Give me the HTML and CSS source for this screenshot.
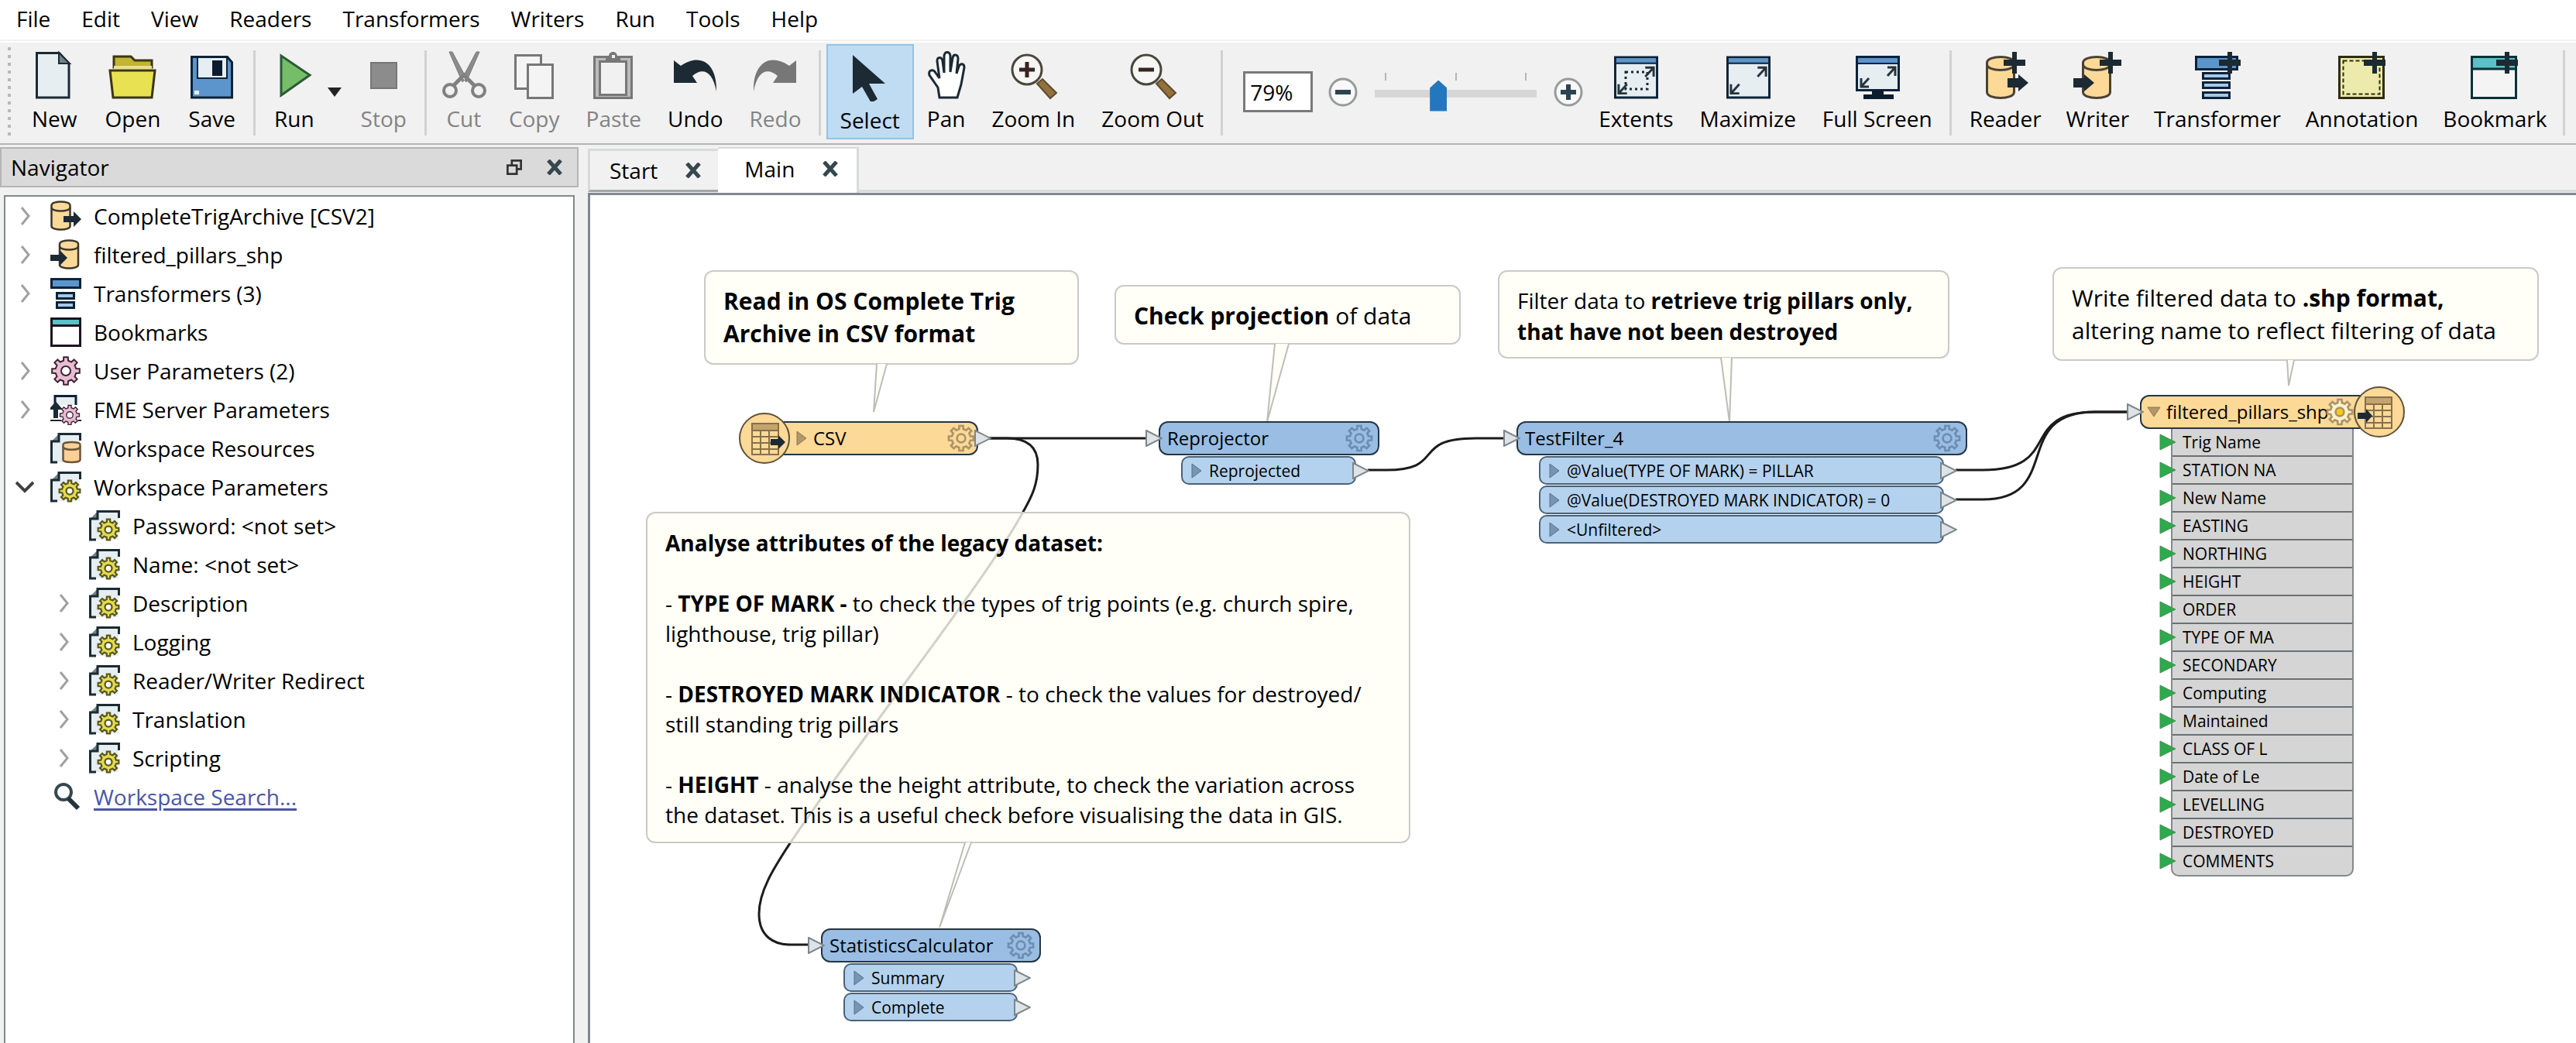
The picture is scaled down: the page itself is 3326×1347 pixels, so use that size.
FILE: index.html
```html
<!DOCTYPE html>
<html lang="en">
<head>
<meta charset="utf-8">
<title>Workbench - Main</title>
<link rel="stylesheet" href="styles.css">
</head>
<body>
<svg class="sprite" aria-hidden="true">
  <symbol id="gear" viewBox="-20 -20 40 40">
    <path d="M13.2-3 17.8-2.8 17.8 2.8 13.2 3 11.5 7.2 14.6 10.6 10.6 14.6 7.2 11.5 3 13.2 2.8 17.8-2.8 17.8-3 13.2-7.2 11.5-10.6 14.6-14.6 10.6-11.5 7.2-13.2 3-17.8 2.8-17.8-2.8-13.2-3-11.5-7.2-14.6-10.6-10.6-14.6-7.2-11.5-3-13.2-2.8-17.8 2.8-17.8 3-13.2 7.2-11.5 10.6-14.6 14.6-10.6 11.5-7.2z"/>
    <circle class="hub" r="6"/>
  </symbol>
  <symbol id="plus" viewBox="0 0 28 28"><path d="M11 0h6v10h11v8H17v10h-6V18H0v-8h11z" fill="#1b2a33"/></symbol>
  <symbol id="arrow" viewBox="0 0 28 22"><path d="M0 5h14V0l13 11-13 11v-5H0z" fill="#1b2a33"/></symbol>
  <symbol id="cylinder" viewBox="0 0 38 56">
    <path d="M1.500 9C1.500-1 36.500-1 36.500 9v38c0 10-35 10-35 0z" fill="#fdd998" stroke="#4a4233" stroke-width="3"/>
    <path d="M1.500 11c0 10 35 10 35 0" fill="none" stroke="#4a4233" stroke-width="3"/>
  </symbol>
  <symbol id="reader" viewBox="0 0 40 40">
    <path d="M1.500 6c0-6 24-6 24 0v27c0 6-24 6-24 0z" fill="#fdd998" stroke="#3d382d" stroke-width="2.500"/>
    <path d="M1.500 9c0 6 24 6 24 0" fill="none" stroke="#3d382d" stroke-width="2.500"/>
    <path d="M17 20h13v-6l10 10-10 10v-6H17z" fill="#1b2a33"/>
  </symbol>
  <symbol id="writer" viewBox="0 0 40 40">
    <path d="M12 6c0-6 24-6 24 0v27c0 6-24 6-24 0z" fill="#fdd998" stroke="#3d382d" stroke-width="2.500"/>
    <path d="M12 9c0 6 24 6 24 0" fill="none" stroke="#3d382d" stroke-width="2.500"/>
    <path d="M0 20h12v-6l10 10-10 10v-6H0z" fill="#1b2a33"/>
  </symbol>
  <symbol id="transformers" viewBox="0 0 40 40">
    <g stroke="#0b2239" stroke-width="3"><path d="M1.500 1.500h37v11h-37z" fill="#5b95cc"/><path d="M8.500 19.500h22v7h-22zM8.500 31.500h22v7h-22z" fill="#a5c8ea"/></g>
  </symbol>
  <symbol id="bookmark" viewBox="0 0 40 40">
    <path d="M1.500 2.500h37v35h-37z" fill="#fff" stroke="#1d1420" stroke-width="3"/><path d="M3 4h34v6H3z" fill="#5bc0c8"/><path d="M2 11.500h36" stroke="#1d1420" stroke-width="3"/>
  </symbol>
  <symbol id="server" viewBox="0 0 40 40">
    <path d="M6 14V2.500h27V14" fill="#e6eef2" stroke="#0b2239" stroke-width="3"/>
    <path d="M5 30V19H0l7-8 7 8H9v11zM0 34h14M36 34h4" fill="#1b2a33" stroke="#1b2a33" stroke-width="2"/>
    <use href="#gear" class="pink" x="11" y="13" width="28" height="28"/>
  </symbol>
  <symbol id="doc" viewBox="0 0 40 40">
    <path d="M2 38V11L11 2h27v36z" fill="#e6eef2"/>
    <path d="M1.500 11 11 1.500V11z" fill="#6f8389"/>
    <path d="M9 38H1.500V11H11V1.500h27.500V10" fill="none" stroke="#1b2a33" stroke-width="3"/>
  </symbol>
  <symbol id="resources" viewBox="0 0 40 40">
    <use href="#doc" width="40" height="40"/>
    <path d="M16.500 15c0-4 22-4 22 0v20c0 4-22 4-22 0z" fill="#fdd098" stroke="#6b5637" stroke-width="2.500"/><path d="M16.500 18c0 5 22 5 22 0" fill="none" stroke="#6b5637" stroke-width="2.500"/>
  </symbol>
  <symbol id="param" viewBox="0 0 40 40">
    <use href="#doc" width="40" height="40"/>
    <use href="#gear" class="yellow" x="10" y="10" width="30" height="30"/>
  </symbol>
  <symbol id="chevron" viewBox="0 0 24 24"><path d="m8 1 9 11-9 11" fill="none" stroke="#a0a0a0" stroke-width="3"/></symbol>
  <symbol id="chevron-open" viewBox="0 0 24 24"><path d="m1 6 11 11L23 6" fill="none" stroke="#404040" stroke-width="4"/></symbol>
  <symbol id="close" viewBox="0 0 20 20"><path d="m2 1 16 18M18 1 2 19" stroke="#36474f" stroke-width="5"/></symbol>
  <symbol id="port" viewBox="0 0 22 22"><path d="m1 1 20 10L1 21z" fill="#dde3e6" stroke="#7d868b" stroke-width="2"/></symbol>
  <symbol id="green" viewBox="0 0 22 22"><path d="m1 1 20 10L1 21z" fill="#2bab4b" stroke="#4d8a5a" stroke-width="1"/></symbol>
  <symbol id="expand" viewBox="0 0 14 20"><path d="m1 1 12 9-12 9z"/></symbol>
  <symbol id="table" viewBox="0 0 36 42">
    <path d="M1 1h34v40H1z" fill="#fdd998"/><path d="M1 1h34v9H1z" fill="#c5a46c"/>
    <path d="M1 1h34v40H1zM1 10h34M1 18h34M1 26h34M1 34h34M12 10v31M23 10v31" fill="none" stroke="#85714c" stroke-width="2"/>
  </symbol>
  <symbol id="window" viewBox="0 0 58 56">
    <path d="M1.500 1.500h55v53h-55z" fill="#e6eef2" stroke="#0b2239" stroke-width="3"/><path d="M3 3h52v6H3z" fill="#5b95cc"/><path d="M3 9.500h52" stroke="#0b2239" stroke-width="2"/>
  </symbol>
  <symbol id="corners" viewBox="0 0 58 56">
    <path d="M41 15h11v12M52 15 41 27M17 49H6V37M6 49l11-12" fill="none" stroke="#27353d" stroke-width="3"/>
  </symbol>
</svg>

<nav class="menubar" aria-label="Menu">
  <button>File</button><button>Edit</button><button>View</button><button>Readers</button><button>Transformers</button><button>Writers</button><button>Run</button><button>Tools</button><button>Help</button>
</nav>

<div class="toolbar" role="toolbar" aria-label="Main toolbar">
  <span class="grip"></span>
  <button class="tool wide"><svg viewBox="0 0 64 64"><path d="M9.500 3.500h29L51 17v44H9.500z" fill="#e6eef2" stroke="#1b2a33" stroke-width="3"/><path d="M38 3v14h14z" fill="#6f8389" stroke="#1b2a33" stroke-width="2"/></svg>New</button>
  <button class="tool wide"><svg viewBox="0 0 64 64"><path d="M8 22V8h22l5 5h22v9z" fill="#c2b52f" stroke="#3b3712" stroke-width="3"/><path d="M8 22h49" stroke="#e9e08a" stroke-width="4"/><path d="M3 26h58l-4 35H7z" fill="#e8e151" stroke="#3b3712" stroke-width="3"/></svg>Open</button>
  <button class="tool wide"><svg viewBox="0 0 64 64"><path d="M5.500 8.500h46l6 7V61h-52z" fill="#5b95cc" stroke="#0b2239" stroke-width="3"/><path d="M13 9h38v27H13z" fill="#e6eef2" stroke="#0b2239" stroke-width="2"/><path d="M32 13h13v20H32z" fill="#0b1c2e"/><path d="M9 52h6v5H9z" fill="#e6eef2"/></svg>Save</button>
  <span class="sep"></span>
  <button class="tool"><svg viewBox="0 0 64 64"><path d="M15 7v51l37-26z" fill="#75bd68" stroke="#2d5a35" stroke-width="3"/></svg>Run</button>
  <button class="tool-menu" aria-label="Run options"><svg viewBox="0 0 18 12"><path d="M0 0h18L9 12z" fill="#222"/></svg></button>
  <button class="tool wide" disabled><svg viewBox="0 0 64 64"><path d="M16 16h33v33H16z" fill="#8c8c8c" stroke="#777" stroke-width="2"/></svg>Stop</button>
  <span class="sep"></span>
  <button class="tool" disabled><svg viewBox="0 0 64 64"><path d="M13 2h4l18 34-5 5zM52 2h-4L30 36l5 5z" fill="#8c8c8c" stroke="#777"/><circle cx="14" cy="52" r="8" fill="#f1f1f1" stroke="#808080" stroke-width="4"/><circle cx="51" cy="52" r="8" fill="#f1f1f1" stroke="#808080" stroke-width="4"/><path d="m19 45 13-13 13 13" fill="none" stroke="#808080" stroke-width="5"/></svg>Cut</button>
  <button class="tool" disabled><svg viewBox="0 0 64 64"><g fill="#f4f4f4" stroke="#777" stroke-width="3"><path d="M7.500 6.500h33v43h-33z"/><path d="M23.500 18.500h32v43h-32z"/></g></svg>Copy</button>
  <button class="tool" disabled><svg viewBox="0 0 64 64"><path d="M7.500 8.500h48v53h-48z" fill="#bbb" stroke="#777" stroke-width="3"/><path d="M14.500 14.500h34v43h-34z" fill="#f1f1f1" stroke="#777" stroke-width="3"/><path d="M22 15V8h4c0-8 11-8 11 0h4v7z" fill="#777"/><path d="M30 6h4v4h-4z" fill="#f1f1f1"/></svg>Paste</button>
  <button class="tool"><svg viewBox="0 0 64 64"><path d="M4 13l9 7c24-17 47-5 46 33-5-27-18-31-31-20l6 9H4z" fill="#1b2a33"/></svg>Undo</button>
  <button class="tool" disabled><svg viewBox="0 0 64 64"><path d="M59 13l-9 7C26 3 3 15 4 53c5-27 18-31 31-20l-6 9h30z" fill="#777"/></svg>Redo</button>
  <span class="sep"></span>
  <button class="tool active" aria-pressed="true"><svg viewBox="0 0 64 64"><path d="M10 4v50l12-9 12 21 8-5-11-20h21z" fill="#1b2a33"/></svg>Select</button>
  <button class="tool"><svg viewBox="0 0 64 64"><path d="M23 61 21 48 10 32c-2-7 5-8 8-3l5 7-3-22c0-6 6-6 7 0l2 15V7c1-6 7-6 8 0v21l3-18c1-6 7-5 7 1l-2 19 3-9c2-5 7-4 7 1l-4 22-5 17z" fill="#fff" stroke="#1b2a33" stroke-width="3"/></svg>Pan</button>
  <button class="tool"><svg viewBox="0 0 64 64"><circle cx="24" cy="25" r="19" fill="#f6f6f4" stroke="#4b463c" stroke-width="3"/><path d="M14 25h20M24 15v20" stroke="#3a2420" stroke-width="5"/><path d="m37 43 7-6 18 18-8 7z" fill="#94703c" stroke="#5d4b30" stroke-width="2"/></svg>Zoom In</button>
  <button class="tool"><svg viewBox="0 0 64 64"><circle cx="24" cy="25" r="19" fill="#f6f6f4" stroke="#4b463c" stroke-width="3"/><path d="M14 25h20" stroke="#3a2420" stroke-width="5"/><path d="m37 43 7-6 18 18-8 7z" fill="#94703c" stroke="#5d4b30" stroke-width="2"/></svg>Zoom Out</button>
  <span class="sep"></span>
  <div class="zoom">
    <input class="zoom-value" type="text" value="79%" aria-label="Zoom level">
    <button class="round" aria-label="Decrease zoom"><svg viewBox="0 0 38 38"><circle cx="19" cy="19" r="17" fill="#f8f8f8" stroke="#969b9b" stroke-width="3"/><path d="M9 19h20" stroke="#2c4450" stroke-width="6"/></svg></button>
    <div class="slider">
      <div class="ticks"><i></i><i></i><i></i></div>
      <input type="range" min="0" max="100" value="38" aria-label="Zoom slider">
    </div>
    <button class="round" aria-label="Increase zoom"><svg viewBox="0 0 38 38"><circle cx="19" cy="19" r="17" fill="#f8f8f8" stroke="#969b9b" stroke-width="3"/><path d="M9 19h20M19 9v20" stroke="#2c4450" stroke-width="6"/></svg></button>
  </div>
  <button class="tool"><svg viewBox="0 0 64 64"><use href="#window" x="4" y="7" width="57" height="56"/><path d="M19 28h28v22H19z" fill="none" stroke="#1b2a33" stroke-width="3" stroke-dasharray="3 4"/><use href="#corners" x="4" y="7" width="57" height="56"/></svg>Extents</button>
  <button class="tool"><svg viewBox="0 0 64 64"><use href="#window" x="4" y="7" width="57" height="56"/><use href="#corners" x="4" y="7" width="57" height="56"/></svg>Maximize</button>
  <button class="tool"><svg viewBox="0 0 64 64"><path d="M5.500 8.500h54v43h-54z" fill="#e6eef2" stroke="#0b2239" stroke-width="3"/><path d="M7 10h51v6H7z" fill="#5b95cc"/><path d="M7 17h51" stroke="#0b2239" stroke-width="2"/><path d="M25 52h15v5h13v6H14v-6h11z" fill="#0b1c2e"/><path d="M45 22h10v11M55 22 45 33M21 47H11V36M11 47l10-11" fill="none" stroke="#27353d" stroke-width="3"/></svg>Full Screen</button>
  <span class="sep"></span>
  <button class="tool tight"><svg viewBox="0 0 64 64"><use href="#cylinder" x="7" y="7" width="38" height="56"/><use href="#plus" x="30" y="2" width="28" height="28"/><use href="#arrow" x="35" y="31" width="28" height="22"/></svg>Reader</button>
  <button class="tool tight"><svg viewBox="0 0 64 64"><use href="#cylinder" x="12" y="7" width="38" height="56"/><use href="#plus" x="35" y="2" width="28" height="28"/><use href="#arrow" x="1" y="31" width="28" height="22"/></svg>Writer</button>
  <button class="tool tight"><svg viewBox="0 0 64 64"><g stroke="#0b2239" stroke-width="3"><path d="M4.500 8.500h53v16h-53z" fill="#5b95cc"/><path d="M13.500 29.500h34v7h-34zM13.500 41.500h34v7h-34zM13.500 54.500h34v7h-34z" fill="#a5c8ea"/></g><use href="#plus" x="34" y="2" width="28" height="28"/></svg>Transformer</button>
  <button class="tool tight"><svg viewBox="0 0 64 64"><path d="M2.500 8.500h57v53h-57z" fill="#ecebab" stroke="#2f2c10" stroke-width="3"/><path d="M7.500 13.500h47v43h-47z" fill="none" stroke="#2f2c10" stroke-width="2" stroke-dasharray="5 3"/><use href="#plus" x="34" y="2" width="28" height="28"/></svg>Annotation</button>
  <button class="tool tight"><svg viewBox="0 0 64 64"><path d="M2.500 8.500h57v53h-57z" fill="#f4f4f4" stroke="#0b3138" stroke-width="3"/><path d="M4 10h54v13H4z" fill="#5bc0c8"/><path d="M3 24h56" stroke="#0b3138" stroke-width="3"/><use href="#plus" x="34" y="2" width="28" height="28"/></svg>Bookmark</button>
  <span class="sep"></span>
</div>

<main class="workspace">
  <aside class="navigator">
    <header class="nav-head">
      <h2>Navigator</h2>
      <button aria-label="Float"><svg class="small" viewBox="0 0 22 22"><path d="M7.500 1.500h13v12h-13z" fill="#dadada" stroke="#333" stroke-width="3"/><path d="M1.500 8.500h13v12h-13z" fill="#dadada" stroke="#333" stroke-width="3"/></svg></button>
      <button aria-label="Close"><svg class="small"><use href="#close"/></svg></button>
    </header>
    <ul class="tree">
      <li><button class="twist" aria-label="Expand"><svg><use href="#chevron"/></svg></button><svg class="icon"><use href="#reader"/></svg>CompleteTrigArchive [CSV2]</li>
      <li><button class="twist" aria-label="Expand"><svg><use href="#chevron"/></svg></button><svg class="icon"><use href="#writer"/></svg>filtered_pillars_shp</li>
      <li><button class="twist" aria-label="Expand"><svg><use href="#chevron"/></svg></button><svg class="icon"><use href="#transformers"/></svg>Transformers (3)</li>
      <li><span class="twist"></span><svg class="icon"><use href="#bookmark"/></svg>Bookmarks</li>
      <li><button class="twist" aria-label="Expand"><svg><use href="#chevron"/></svg></button><svg class="icon pink"><use href="#gear"/></svg>User Parameters (2)</li>
      <li><button class="twist" aria-label="Expand"><svg><use href="#chevron"/></svg></button><svg class="icon"><use href="#server"/></svg>FME Server Parameters</li>
      <li><span class="twist"></span><svg class="icon"><use href="#resources"/></svg>Workspace Resources</li>
      <li><button class="twist" aria-label="Collapse"><svg><use href="#chevron-open"/></svg></button><svg class="icon"><use href="#param"/></svg>Workspace Parameters</li>
      <li class="child"><span class="twist"></span><svg class="icon"><use href="#param"/></svg>Password: &lt;not set&gt;</li>
      <li class="child"><span class="twist"></span><svg class="icon"><use href="#param"/></svg>Name: &lt;not set&gt;</li>
      <li class="child"><button class="twist" aria-label="Expand"><svg><use href="#chevron"/></svg></button><svg class="icon"><use href="#param"/></svg>Description</li>
      <li class="child"><button class="twist" aria-label="Expand"><svg><use href="#chevron"/></svg></button><svg class="icon"><use href="#param"/></svg>Logging</li>
      <li class="child"><button class="twist" aria-label="Expand"><svg><use href="#chevron"/></svg></button><svg class="icon"><use href="#param"/></svg>Reader/Writer Redirect</li>
      <li class="child"><button class="twist" aria-label="Expand"><svg><use href="#chevron"/></svg></button><svg class="icon"><use href="#param"/></svg>Translation</li>
      <li class="child"><button class="twist" aria-label="Expand"><svg><use href="#chevron"/></svg></button><svg class="icon"><use href="#param"/></svg>Scripting</li>
      <li><span class="twist"></span><svg class="icon" viewBox="0 0 40 40"><circle cx="17" cy="14" r="10" fill="none" stroke="#36474f" stroke-width="4"/><path d="m23 22 13 13" stroke="#25343b" stroke-width="6"/></svg><a href="#search">Workspace Search...</a></li>
    </ul>
  </aside>

  <section class="editor">
    <div class="tabs">
      <div class="tab"><button>Start</button><button aria-label="Close Start"><svg class="small"><use href="#close"/></svg></button></div>
      <div class="tab current"><button>Main</button><button aria-label="Close Main"><svg class="small"><use href="#close"/></svg></button></div>
      <div class="tab-rest"></div>
    </div>
    <div class="canvas">
      <svg class="layer wires" aria-hidden="true"><g transform="translate(-762 -252)">
        <path d="M1277 566H1479"/>
        <path d="M1277 566H1300C1330 566 1340 580 1340 600C1340 625 1333 640 1321 661C1300 700 1260 758 1168 883C1100 975 1060 1030 1020 1089C1000 1120 980 1150 980 1180C980 1210 1000 1220 1020 1220H1043"/>
        <path d="M1766 607H1790C1868 607 1820 566 1905 566H1942"/>
        <path d="M2525 607H2560C2665 607 2605 532 2705 532H2747"/>
        <path d="M2525 645H2560C2665 645 2595 532 2705 532H2747"/>
      </g></svg>

      <div class="note note-csv large"><b>Read in OS Complete Trig<br>Archive in CSV format</b></div>
      <div class="note note-projection large"><b>Check projection</b> of data</div>
      <div class="note note-filter">Filter data to <b>retrieve trig pillars only,<br>that have not been destroyed</b></div>
      <div class="note note-write large">Write filtered data to <b>.shp format,</b><br>altering name to reflect filtering of data</div>
      <div class="note note-analyse">
        <p><b>Analyse attributes of the legacy dataset:</b></p>
        <p>- <b>TYPE OF MARK -</b> to check the types of trig points (e.g. church spire,<br>lighthouse, trig pillar)</p>
        <p>- <b>DESTROYED MARK INDICATOR</b> - to check the values for destroyed/<br>still standing trig pillars</p>
        <p>- <b>HEIGHT</b> - analyse the height attribute, to check the variation across<br>the dataset. This is a useful check before visualising the data in GIS.</p>
      </div>

      <svg class="layer pointers" aria-hidden="true"><g transform="translate(-762 -252)">
        <path d="M1132 470L1128 532L1145 470"/>
        <path d="M1646 444L1636 545L1664 444"/>
        <path d="M2222 462L2233 545L2236 462"/>
        <path d="M2953 465L2955 498L2962 465"/>
        <path d="M1246 1088L1213 1198L1254 1088"/>
      </g></svg>

      <div class="node node-csv feature">
        <div class="head"><svg class="expand"><use href="#expand"/></svg><span>CSV</span><svg class="gear"><use href="#gear"/></svg><svg class="port out"><use href="#port"/></svg></div>
        <svg class="badge left" viewBox="0 0 66 66"><circle cx="33" cy="33" r="32" fill="#fdd998" stroke="#5e5238" stroke-width="2"/><use href="#table" x="16" y="13" width="36" height="42"/><path d="M41 34h10v-5l9 9-9 9v-5H41z" fill="#1b2a33"/></svg>
      </div>
      <div class="node node-reprojector">
        <div class="head"><svg class="port in"><use href="#port"/></svg><span>Reprojector</span><svg class="gear"><use href="#gear"/></svg></div>
        <div class="row"><svg class="expand"><use href="#expand"/></svg><span>Reprojected</span><svg class="port out"><use href="#port"/></svg></div>
      </div>
      <div class="node node-filter">
        <div class="head"><svg class="port in"><use href="#port"/></svg><span>TestFilter_4</span><svg class="gear"><use href="#gear"/></svg></div>
        <div class="row"><svg class="expand"><use href="#expand"/></svg><span>@Value(TYPE OF MARK) = PILLAR</span><svg class="port out"><use href="#port"/></svg></div>
        <div class="row"><svg class="expand"><use href="#expand"/></svg><span>@Value(DESTROYED MARK INDICATOR) = 0</span><svg class="port out"><use href="#port"/></svg></div>
        <div class="row"><svg class="expand"><use href="#expand"/></svg><span>&lt;Unfiltered&gt;</span><svg class="port out"><use href="#port"/></svg></div>
      </div>
      <div class="node node-stats">
        <div class="head"><svg class="port in"><use href="#port"/></svg><span>StatisticsCalculator</span><svg class="gear"><use href="#gear"/></svg></div>
        <div class="row"><svg class="expand"><use href="#expand"/></svg><span>Summary</span><svg class="port out"><use href="#port"/></svg></div>
        <div class="row"><svg class="expand"><use href="#expand"/></svg><span>Complete</span><svg class="port out"><use href="#port"/></svg></div>
      </div>
      <div class="node node-writer feature">
        <div class="head"><svg class="port in"><use href="#port"/></svg><svg class="collapse" viewBox="0 0 18 14"><path d="M1 1h16L9 13z"/></svg><span>filtered_pillars_shp</span><svg class="gear lit"><use href="#gear"/></svg></div>
        <ul class="attributes">
          <li><svg><use href="#green"/></svg>Trig Name</li>
          <li><svg><use href="#green"/></svg>STATION NA</li>
          <li><svg><use href="#green"/></svg>New Name</li>
          <li><svg><use href="#green"/></svg>EASTING</li>
          <li><svg><use href="#green"/></svg>NORTHING</li>
          <li><svg><use href="#green"/></svg>HEIGHT</li>
          <li><svg><use href="#green"/></svg>ORDER</li>
          <li><svg><use href="#green"/></svg>TYPE OF MA</li>
          <li><svg><use href="#green"/></svg>SECONDARY</li>
          <li><svg><use href="#green"/></svg>Computing</li>
          <li><svg><use href="#green"/></svg>Maintained</li>
          <li><svg><use href="#green"/></svg>CLASS OF L</li>
          <li><svg><use href="#green"/></svg>Date of Le</li>
          <li><svg><use href="#green"/></svg>LEVELLING</li>
          <li><svg><use href="#green"/></svg>DESTROYED</li>
          <li><svg><use href="#green"/></svg>COMMENTS</li>
        </ul>
        <svg class="badge right" viewBox="0 0 66 66"><circle cx="33" cy="33" r="32" fill="#fdd998" stroke="#5e5238" stroke-width="2"/><use href="#table" x="14" y="13" width="36" height="42"/><path d="M5 34h11v-5l8 9-8 9v-5H5z" fill="#1b2a33"/></svg>
      </div>
    </div>
  </section>
</main>
</body>
</html>
```
FILE: styles.css
```css
* { box-sizing: border-box; }

body {
  margin: 0;
  min-height: 100vh;
  display: flex;
  flex-direction: column;
  background: #f1f1f1;
  color: #000;
  font: 28px/36px "Open Sans", "Noto Sans", sans-serif;
  white-space: nowrap;
}

button {
  margin: 0;
  padding: 0;
  border: 0;
  background: none;
  color: inherit;
  font: inherit;
}

svg { display: block; flex: none; }
.sprite { position: absolute; width: 0; height: 0; }

/* Menu bar */
.menubar {
  display: flex;
  gap: 40px;
  height: 55px;
  padding: 6px 21px 0;
  background: linear-gradient(#fff 51px, #f1f1f1 51px, #f1f1f1 53px, #fff 53px);
}
.menubar button { height: 36px; }

/* Toolbar */
.toolbar {
  display: flex;
  height: 132px;
  padding: 2px 0 0 10px;
  border-bottom: 2px solid #b5b5b5;
}
.grip {
  flex: none;
  width: 4px;
  height: 118px;
  margin: 4px 9px 0 0;
  background: repeating-linear-gradient(#b9b9b9 0 4px, transparent 4px 10px);
}
.tool {
  flex: none;
  display: flex;
  flex-direction: column;
  align-items: center;
  gap: 6px;
  height: 123px;
  padding: 8px 17px 0;
}
.tool svg { width: 64px; height: 64px; margin: 0 -8px; }
.tool.wide { padding: 8px 18px 0; }
.tool.tight { padding: 8px 16px 0; }
.tool:disabled { color: #838383; }
.tool.active {
  padding: 8px 16px 0;
  border: 2px solid #92c3e4;
  background: #c0dcf3;
}
.tool-menu { flex: none; display: flex; align-items: center; width: 25px; height: 123px; }
.tool-menu svg { width: 18px; height: 12px; }
.sep {
  flex: none;
  width: 3px;
  height: 110px;
  margin: 8px 7px 0 5px;
  background: #d2d2d2;
}
.zoom {
  flex: none;
  display: flex;
  align-items: center;
  height: 123px;
  padding: 0 3px 0 19px;
}
.zoom-value {
  width: 90px;
  height: 53px;
  margin-right: 20px;
  padding: 0 6px;
  border: 3px solid #7a7a7a;
  background: #fff;
  color: #000;
  font: inherit;
}
.round svg { width: 38px; height: 38px; }
.slider { width: 209px; height: 50px; margin: 0 22px; }
.ticks {
  display: flex;
  justify-content: space-between;
  height: 10px;
  padding: 0 13px;
}
.ticks i { width: 2px; background: #b5b5b0; }
.slider input {
  display: block;
  width: 100%;
  height: 40px;
  margin: 0;
  appearance: none;
  background: linear-gradient(#d6d6d6, #d6d6d6) 0 12px / 100% 10px no-repeat;
}
.slider input::-webkit-slider-thumb {
  appearance: none;
  width: 22px;
  height: 40px;
  background: #2577bd;
  clip-path: polygon(50% 0, 100% 25%, 100% 100%, 0 100%, 0 25%);
}

/* Main area */
.workspace { flex: 1; display: flex; gap: 12px; padding-top: 3px; }
.navigator { flex: none; width: 747px; display: flex; flex-direction: column; }
.nav-head {
  display: flex;
  align-items: center;
  gap: 30px;
  height: 52px;
  padding: 0 18px 0 12px;
  border: 2px solid #b5b5b5;
  background: #dadada;
}
.nav-head h2 { flex: 1; margin: 0; font-size: 28px; font-weight: 400; }
.small { width: 22px; height: 20px; }
.tree {
  flex: 1;
  margin: 10px 5px 0;
  padding: 0;
  border: 2px solid #85878f;
  border-bottom: 0;
  background: #fff;
  list-style: none;
}
.tree li { display: flex; align-items: center; height: 50px; padding-left: 13px; }
.tree .child { padding-left: 63px; }
.twist { width: 24px; height: 24px; margin-right: 21px; }
.twist svg { width: 24px; height: 24px; }
.icon { width: 40px; height: 40px; margin-right: 16px; }
.tree a { color: #4a55a5; text-decoration-thickness: 3px; text-underline-offset: 4px; }

.hub { fill: var(--hub, none); }
.pink { --hub: #fff; fill: #e8bcd2; stroke: #3d2433; stroke-width: 2; }
.yellow { --hub: #fff; fill: #e3dc4e; stroke: #5b571d; stroke-width: 3; }

/* Editor */
.editor { flex: 1; min-width: 0; display: flex; flex-direction: column; }
.tabs { display: flex; height: 59px; }
.tab {
  display: flex;
  align-items: center;
  gap: 35px;
  height: 56px;
  margin-top: 2px;
  padding: 0 21px 0 25px;
  border: 3px solid #d9dadb;
  border-right: 0;
  border-bottom-color: #a3a5a7;
}
.current {
  height: 59px;
  margin-top: 0;
  padding: 0 23px 5px 34px;
  border: 2px solid #d9dadb;
  border-width: 2px 3px 0 0;
  background: #fff;
}
.tab-rest { flex: 1; height: 58px; border-bottom: 3px solid #d9dadb; }
.canvas {
  position: relative;
  flex: 1;
  border: 3px solid #85878f;
  border-width: 3px 0 0 3px;
  background: #fff;
  overflow: hidden;
}
.layer { position: absolute; inset: 0; width: 100%; height: 100%; overflow: visible; }
.wires path { fill: none; stroke: #1c1c1c; stroke-width: 3; }
.pointers path { fill: #fffff8; stroke: #bdbdb8; stroke-width: 2; }

/* Notes */
.note {
  position: absolute;
  padding: 17px 23px;
  border: 2px solid #cacac6;
  border-radius: 12px;
  background: rgb(255 255 246 / 80%);
  line-height: 40px;
}
.note p { margin: 0 0 39px; line-height: 39px; }
.large { font-size: 30px; line-height: 42px; }
.note-csv { left: 147px; top: 97px; width: 484px; height: 122px; }
.note-projection { left: 677px; top: 116px; width: 447px; height: 77px; }
.note-filter { left: 1172px; top: 97px; width: 583px; height: 114px; }
.note-write { left: 1888px; top: 93px; width: 628px; height: 121px; }
.note-analyse { left: 72px; top: 409px; width: 987px; height: 428px; padding-top: 19px; }

/* Nodes */
.node { position: absolute; font-size: 24px; }
.node-csv { left: 225px; top: 292px; width: 276px; }
.node-reprojector { left: 734px; top: 292px; width: 285px; }
.node-filter { left: 1196px; top: 292px; width: 582px; }
.node-stats { left: 298px; top: 947px; width: 284px; }
.node-writer { left: 2001px; top: 258px; width: 309px; }

.head {
  position: relative;
  display: flex;
  align-items: center;
  height: 44px;
  padding: 0 6px 0 9px;
  border: 2px solid #263541;
  border-radius: 12px;
  background: #99bde3;
}
.head span { flex: 1; }
.gear { width: 36px; height: 36px; fill: none; stroke: #6c8eb0; stroke-width: 3; }
.feature .head { background: #fdd998; }
.feature .gear { stroke: #ad9468; }
.lit { --hub: #f9cb10; }
.lit use { fill: #fff2cc; }
.feature .lit { margin: 0 31px 0 -5px; }
.node-csv .head { padding: 0 2px 0 39px; }
.node-writer .head { padding: 0 0 0 7px; }
.node-csv .head span { padding-left: 8px; }
.expand { width: 14px; height: 20px; fill: #7695b2; stroke: #55728c; stroke-width: 1; }
.feature .expand, .collapse { fill: #b1976a; stroke: #8c7750; }
.collapse { width: 18px; height: 14px; margin-right: 7px; }

.row {
  position: relative;
  display: flex;
  align-items: center;
  gap: 9px;
  height: 37px;
  margin: 1px 30px 0 29px;
  padding-left: 11px;
  border: 2px solid #4b6377;
  border-radius: 10px;
  background: #b4d2ed;
  font-size: 21px;
}
.port { position: absolute; top: 50%; width: 22px; height: 22px; margin-top: -11px; }
.in { left: -19px; }
.out { right: -19px; }

.badge { position: absolute; top: -11px; width: 66px; height: 66px; }
.left { left: -33px; }
.right { right: -33px; }

.attributes {
  width: 236px;
  margin: 0 0 0 40px;
  padding: 0;
  border: 2px solid #85898c;
  border-top: 0;
  border-radius: 0 0 10px 10px;
  background: #d5d5d5;
  font-size: 21px;
  list-style: none;
}
.attributes li {
  display: flex;
  align-items: center;
  height: 36px;
  border-bottom: 2px solid #6c7073;
}
.attributes li:last-child { border-bottom: 0; }
.attributes svg { width: 22px; height: 22px; margin: 0 8px 0 -17px; }
```
